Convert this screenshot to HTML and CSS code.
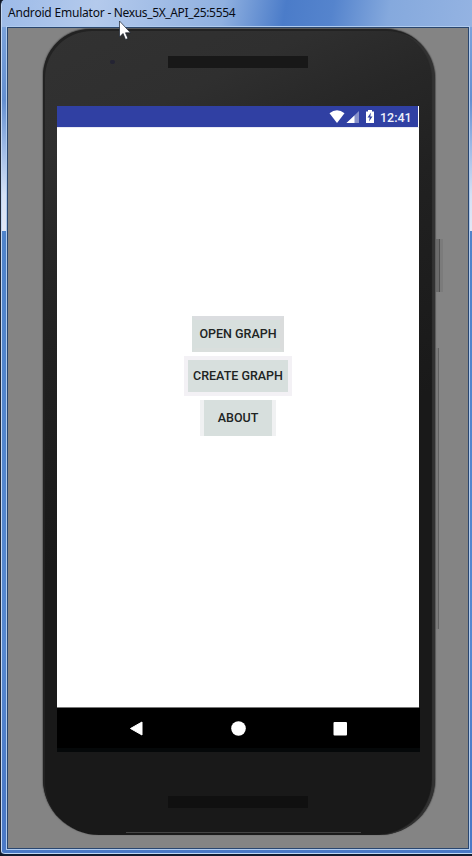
FILE: index.html
```
<!DOCTYPE html>
<html lang="en">
<head>
<meta charset="utf-8">
<title>Android Emulator</title>
<link rel="stylesheet" href="styles.css">
</head>
<body>
<div class="window">
  <header class="titlebar"><span class="title">Android Emulator <span class="device">- Nexus_5X_API_25:5554</span></span></header>
  <main class="client">
    <div class="phone">
      <div class="bezel-top"><i class="camera"></i><div class="speaker"></div></div>
      <div class="screen">
        <div class="status">
          <svg class="status-icons" width="48" height="21" viewBox="0 0 48 21">
            <path d="M0.500 7.200Q8 1.500 15.500 7.200L8 17Z" fill="#fff"/>
            <path d="M17.500 17L30 5V17Z" fill="#8791ca"/>
            <path d="M17.500 17L25.500 9.500V17Z" fill="#fff"/>
            <path d="M37 5.500H39V4H43V5.500H45V17H37Z" fill="#fff"/>
            <path d="M42 6.500L38.500 11.500H40.700L40 15.500L43.500 10.500H41.300Z" fill="#3040a3"/>
          </svg>
          <span class="clock">12:41</span>
        </div>
        <div class="app">
          <button class="btn open">OPEN GRAPH</button>
          <button class="btn create">CREATE GRAPH</button>
          <button class="btn about">ABOUT</button>
        </div>
        <nav class="nav">
          <svg width="16" height="16" viewBox="0 0 16 16"><path d="M1.500 8.500L13 2V15Z" fill="#fff" stroke="#fff" stroke-linejoin="round"/></svg>
          <svg width="16" height="16" viewBox="0 0 16 16"><circle cx="7.500" cy="8.500" r="7.300" fill="#fff"/></svg>
          <svg width="16" height="16" viewBox="0 0 16 16"><rect x="1.500" y="2" width="13.500" height="13.500" rx="1" fill="#fff"/></svg>
        </nav>
      </div>
      <div class="bezel-bottom"><div class="speaker"></div></div>
      <i class="power"></i>
      <i class="volume"></i>
      <i class="seam"></i>
    </div>
  </main>
  <svg class="cursor" width="14" height="22" viewBox="0 0 14 22"><path d="M1.500 1V17L5 13.500L7.500 19.500L10 18.500L7.500 12.800H12.500Z" fill="#fff" stroke="#17202e" stroke-width=".7"/></svg>
</div>
</body>
</html>
```
FILE: styles.css
```
* { box-sizing: border-box; }
body { margin: 0; background: #111827; }
.window {
  position: relative;
  width: 472px;
  height: 856px;
  padding: 0 3px 6px 6px;
  border-left: 1px solid #20283a;
  border-bottom: 2px solid #101c30;
  border-radius: 5px 0 0 5px;
  background: linear-gradient(#82a9df 0, #648fd0 100px, #9bb8e5 145px, #d5e1f5 195px, #e2e7f5 231px, #4f83ca 231px, #5688d0 650px, #4a79c6 800px);
  box-shadow: inset 1px 0 #c4d8f3, inset 0 -1px #c1d8f4;
  overflow: hidden;
}
.titlebar {
  height: 27px;
  margin: 0 -3px 0 -5px;
  padding-left: 6px;
  background: linear-gradient(100deg, #9dbbe8 0, #b4caec 20%, #8fb0e0 47%, #4b7cc9 60%, #5584cd 70%, #85a9dd 82%, #94b3e2 100%);
}
.title {
  display: block;
  width: 230px;
  white-space: nowrap;
  font: 12px/26px "Noto Sans", sans-serif;
  letter-spacing: -.2px;
  color: #080c14;
}
.device { letter-spacing: -.35px; }
.client {
  height: 822px;
  padding: 1px 0 0 35px;
  background: #848484;
  border: 1px solid #29466f;
  box-shadow: 0 0 0 1px #b0cbee;
}
.phone {
  position: relative;
  width: 392px;
  height: 806px;
  padding-left: 14px;
  border-radius: 47px 50px 56px 56px;
  background: linear-gradient(155deg, #323232 0, #2f2f2f 13%, #272727 22%, #212121 32%, #191919 55%, #191919 100%);
  box-shadow: inset 2px 2px #222, inset -3px 0 1px #323232, -1px 0 1px #666, 0 -1px 1px #555, 1px 0 1px #5b5b5b;
}
.bezel-top { position: relative; height: 77px; padding: 27px 0 0 111px; }
.bezel-bottom { height: 83px; padding: 44px 0 0 111px; }
.speaker { width: 140px; height: 12px; background: #181818; }
.bezel-bottom .speaker { background: #101010; }
.camera { position: absolute; left: 53px; top: 31px; width: 5px; height: 4px; background: #242433; border-radius: 2px; }
.screen { width: 363px; height: 646px; }
.status {
  display: flex;
  justify-content: flex-end;
  width: 362px;
  height: 21px;
  padding-right: 6px;
  background: #3040a3;
  border-right: 1px solid #fff;
}
.status-icons { margin-right: 3px; }
.clock { font: 500 12.500px/23px Roboto, sans-serif; color: #eef0fa; width: 32px; white-space: nowrap; }
.app {
  display: flex;
  flex-direction: column;
  align-items: center;
  width: 362px;
  height: 581px;
  padding-top: 188px;
  background: #fff;
  border-top: 1px solid #e9eaf3;
  border-bottom: 1px solid #777;
}
.btn {
  height: 36px;
  margin: 0;
  padding: 0;
  border: 0;
  background: #d7dfdd;
  color: #202423;
  font: 500 12.500px/34px Roboto, sans-serif;
  white-space: nowrap;
}
.open { width: 92px; margin-bottom: 4px; padding-bottom: 1px; border: 4px solid #dbdde0; line-height: 26px; }
.open { border-left-color: #d7dfdd; border-right-color: #dadcdc; border-bottom-color: #dadfdd; }
.create { width: 108px; height: 40px; border: 4px solid #f3f1f5; line-height: 30px; }
.about { width: 76px; margin-top: 4px; border: solid #f0f1f2; border-width: 0 4px; }
.nav {
  display: flex;
  justify-content: space-between;
  height: 44px;
  padding: 12px 72px 0;
  background: #000;
  border-bottom: 4px solid #050809;
}
.power, .volume, .seam { position: absolute; }
.power { left: 393px; top: 210px; width: 4px; height: 53px; background: #6b6b6b; border-right: 1px solid #505050; box-shadow: 3px 0 #7b7b7b; }
.volume { left: 393px; top: 319px; width: 3px; height: 281px; background: #7b7b7b; border-right: 1px solid #626262; }
.seam { left: 83px; top: 803px; width: 235px; height: 1px; background: #454545; }
.cursor { position: absolute; left: 117px; top: 20px; }
```
